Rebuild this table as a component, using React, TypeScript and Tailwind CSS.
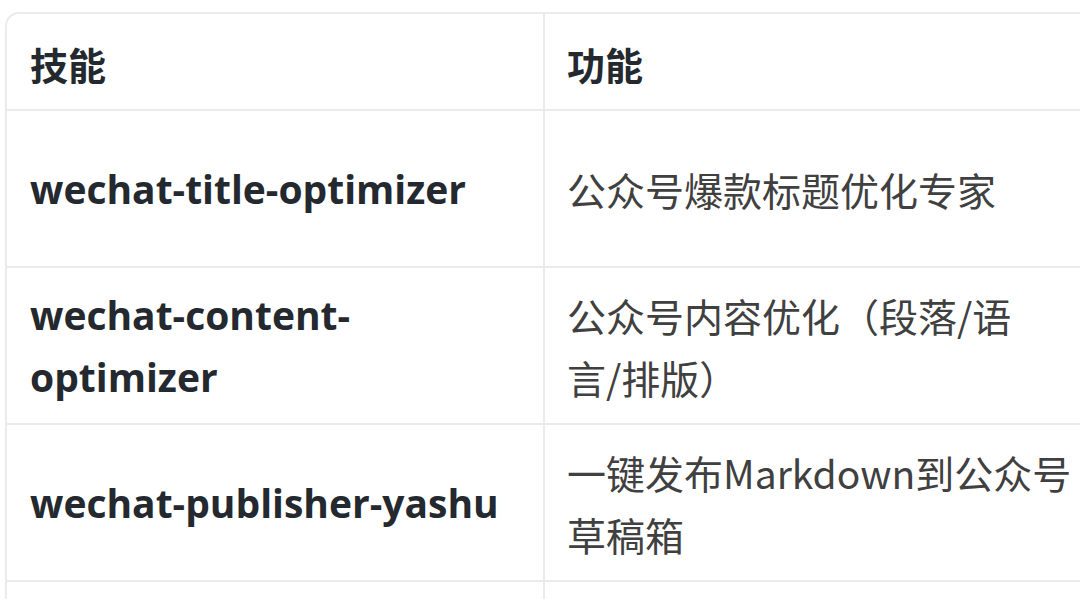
import React from "react";

const rows: { skill: string[]; func: string[] }[] = [
  { skill: ["wechat-title-optimizer"], func: ["公众号爆款标题优化专家"] },
  { skill: ["wechat-content-", "optimizer"], func: ["公众号内容优化（段落/语", "言/排版）"] },
  { skill: ["wechat-publisher-yashu"], func: ["一键发布Markdown到公众号", "草稿箱"] },
  { skill: [""], func: [""] },
];

export default function App() {
  return (
    <div className="w-[1080px] h-[599px] overflow-hidden bg-white pt-[12px] pl-[5px]" style={{ fontFamily: '"Open Sans", "Noto Sans CJK SC", sans-serif' }}>
      <div className="w-[1120px] rounded-tl-[14px] border-2 border-[#ebebeb] overflow-hidden">
        <div className="grid grid-cols-[538px_1fr]">
          <div className="h-[97px] flex items-center pl-[23px] pt-[8px] text-[38px] font-bold text-[#24292f] border-b-2 border-r-2 border-[#ebebeb]">技能</div>
          <div className="h-[97px] flex items-center pl-[22px] pt-[8px] text-[38px] font-bold text-[#24292f] border-b-2 border-[#ebebeb]">功能</div>
          {rows.map((r, i) => (
            <React.Fragment key={i}>
              <div className="h-[157px] flex flex-col justify-center pl-[23px] border-b-2 border-r-2 border-[#ebebeb] text-[39px] font-bold text-[#24292f] leading-[62px]">
                {r.skill.map((s, j) => (
                  <div key={j}>{s}</div>
                ))}
              </div>
              <div className="h-[157px] flex flex-col justify-center pl-[22px] border-b-2 border-[#ebebeb] text-[39px] text-[#404040] leading-[62px] font-['Noto_Sans_CJK_SC',sans-serif]">
                {r.func.map((s, j) => (
                  <div key={j}>{s}</div>
                ))}
              </div>
            </React.Fragment>
          ))}
        </div>
      </div>
    </div>
  );
}
